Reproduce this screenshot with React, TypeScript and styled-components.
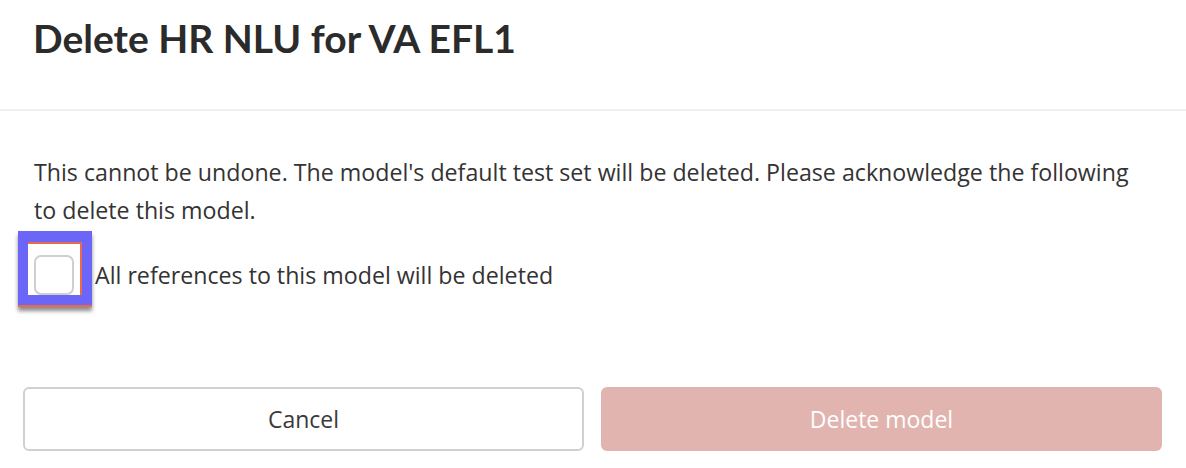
import { useState } from 'react';
import styled, { createGlobalStyle } from 'styled-components';

const GlobalStyle = createGlobalStyle`
  html, body {
    margin: 0;
    padding: 0;
    background: #ffffff;
  }
  body {
    font-family: "Open Sans", "Liberation Sans", sans-serif;
    color: #333333;
  }
`;

const App = () => {
    const [ack, setAck] = useState(false);

    return (
        <>
            <GlobalStyle />
            <Dialog>
                <Header>
                    <Title>Delete HR NLU for VA EFL1</Title>
                </Header>
                <Body>
                    <Message>
                        This cannot be undone. The model's default test set will be deleted. Please acknowledge the following
                        to delete this model.
                    </Message>
                    <CheckRow>
                        <FocusRing>
                            <Inner>
                                <Box type="checkbox" checked={ack} onChange={() => setAck(!ack)} />
                            </Inner>
                        </FocusRing>
                        <CheckLabel>All references to this model will be deleted</CheckLabel>
                    </CheckRow>
                </Body>
                <Footer>
                    <Button>Cancel</Button>
                    <Button $danger disabled={!ack}>
                        Delete model
                    </Button>
                </Footer>
            </Dialog>
        </>
    );
};

export default App;

const Dialog = styled.div`
  width: 1186px;
  height: 468px;
  display: flex;
  flex-direction: column;
  background: #fff;
`;

const Header = styled.div`
  height: 109px;
  padding: 0 33px;
  border-bottom: 2px solid #efefef;
  display: flex;
  align-items: flex-start;
`;

const Title = styled.h1`
  margin: 14px 0 0;
  font-family: Lato, "Liberation Sans", sans-serif;
  font-size: 39px;
  font-weight: 700;
  line-height: 48px;
  color: #2b2b2b;
`;

const Body = styled.div`
  padding: 42px 34px 0;
`;

const Message = styled.p`
  margin: 0;
  max-width: 1115px;
  font-size: 23.2px;
  line-height: 38px;
  color: #333;
`;

const CheckRow = styled.div`
  margin-top: 2px;
  margin-left: -16px;
  display: flex;
  align-items: center;
`;

/* focus ring drawn round the checkbox */
const FocusRing = styled.div`
  background: #6c66f8;
  padding: 11px 10px 10px;
  border-bottom: 2px solid #ea6a4c;
  box-shadow: 0 4px 4px rgba(0, 0, 0, 0.45);
  display: flex;
`;

const Inner = styled.div`
  padding: 11px 6px 0 6px;
  background: #fff;
  border-top: 2px solid #ea6a4c;
  border-right: 2px solid #ea6a4c;
  display: flex;
`;

const Box = styled.input`
  appearance: none;
  display: block;
  margin: 0;
  width: 40px;
  height: 40px;
  border: 2px solid #cfcfcf;
  border-radius: 7px;
  background: #fff;
  cursor: pointer;
  &:checked {
    background: #6c66f8;
    border-color: #6c66f8;
  }
`;

const CheckLabel = styled.span`
  margin-left: 3px;
  padding-top: 12px;
  font-size: 23.2px;
  color: #333;
`;

const Footer = styled.div`
  margin-top: 80px;
  padding: 0 24px 0 23px;
  display: grid;
  grid-template-columns: 1fr 1fr;
  gap: 17px;
`;

const Button = styled.button<{ $danger?: boolean }>`
  height: 64px;
  border-radius: 6px;
  font-family: inherit;
  font-size: 23px;
  cursor: pointer;
  border: 2px solid ${(p) => (p.$danger ? 'transparent' : '#d0d0d0')};
  background: ${(p) => (p.$danger ? '#c0392b' : '#fff')};
  color: ${(p) => (p.$danger ? '#fff' : '#3a3a3a')};
  &:disabled {
    background: #e2b4b0;
    cursor: default;
  }
`;
